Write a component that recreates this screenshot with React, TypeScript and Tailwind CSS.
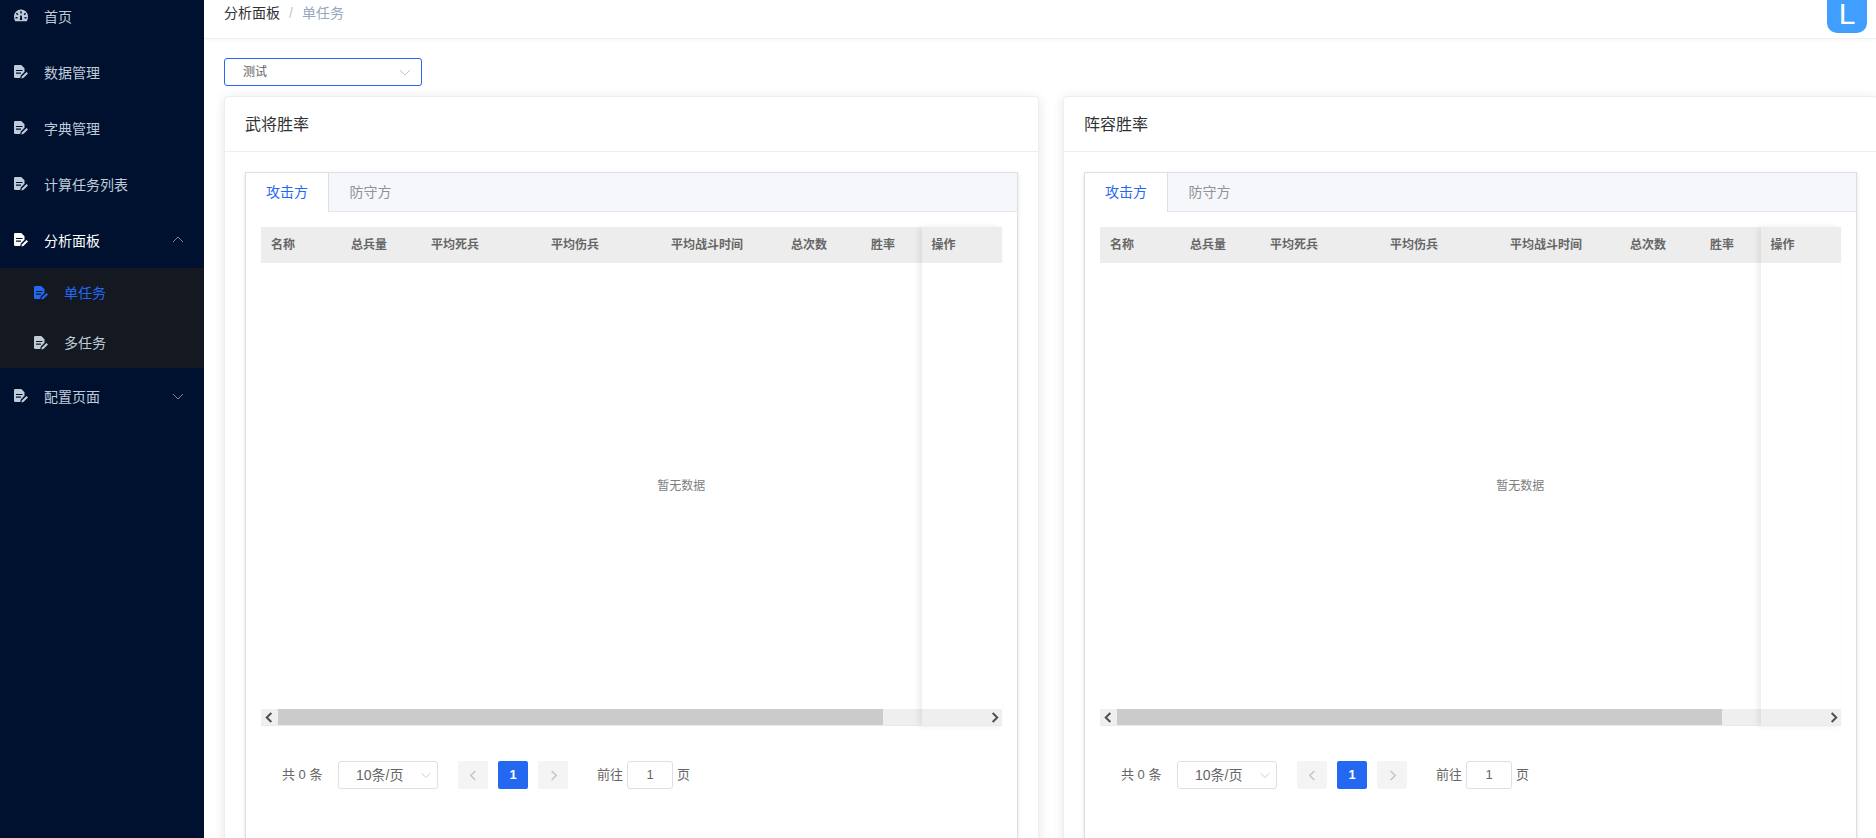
const FONT = "font-['Liberation_Sans','Noto_Sans_CJK_SC',sans-serif]"

function FileIcon({ className }: { className: string }) {
  return (
    <svg viewBox="0 0 14 14" className={`w-[14px] h-[14px] ${className}`} fill="currentColor">
      <path fillRule="evenodd" d="M0 1.300A1.300 1.300 0 0 1 1.300 0H7.300L10.500 3.200V6.800L6.800 10.500 6.200 13H1.300A1.300 1.300 0 0 1 0 11.700ZM2 5v1.100h6.500V5Zm0 2.600v1.100h5V7.600Z" />
      <path d="M7.400 13.600l.5-2 4.600-4.500 1.500 1.400-4.600 4.500Z" />
    </svg>
  )
}

function GaugeIcon({ className }: { className: string }) {
  return (
    <svg viewBox="0 0 14 14" className={`w-[14px] h-[14px] ${className}`} fill="currentColor">
      <path fillRule="evenodd" d="M7 .5a7 7 0 0 1 7 7c0 1.800-.4 3.300-1.200 4.800H1.200C.4 10.800 0 9.300 0 7.500a7 7 0 0 1 7-7ZM6.300 2.200v2.200h1.400V2.200ZM2.900 3.800l-1 1 1.500 1.500 1-1ZM11.100 3.800 9.600 5.300l1 1 1.500-1.500ZM6.200 6.500 5.800 11h2.400L7.800 6.500ZM1.500 8v1.400h2V8ZM10.500 8v1.400h2V8Z" />
    </svg>
  )
}

function Chevron({ dir, className }: { dir: 'up' | 'down' | 'left' | 'right'; className: string }) {
  const points = {
    up: '1,8 6,3 11,8',
    down: '1,4 6,9 11,4',
    left: '8,1 3,6 8,11',
    right: '4,1 9,6 4,11',
  }[dir]
  return (
    <svg viewBox="0 0 12 12" className={className} fill="none" stroke="currentColor" strokeWidth="1">
      <polyline points={points} />
    </svg>
  )
}

function MenuItem({ label, icon, arrow, active }: { label: string; icon?: 'gauge'; arrow?: 'up' | 'down'; active?: boolean }) {
  const color = active ? 'text-white' : 'text-[#bfcbd9]'
  return (
    <div className={`h-[56px] flex items-center pl-[14px] pr-[20px] text-[14px] ${color}`}>
      {icon === 'gauge' ? <GaugeIcon className="mr-[16px]" /> : <FileIcon className="mr-[16px]" />}
      <span className="flex-1 pt-[2px]">{label}</span>
      {arrow && <Chevron dir={arrow} className="w-[12px] h-[12px] text-[#7a8699]" />}
    </div>
  )
}

function SubItem({ label, active }: { label: string; active?: boolean }) {
  const color = active ? 'text-[#2468f2]' : 'text-[#bfcbd9]'
  return (
    <div className={`h-[50px] flex items-center pl-[34px] text-[14px] ${color}`}>
      <FileIcon className="mr-[16px]" />
      <span>{label}</span>
    </div>
  )
}

function Sidebar() {
  return (
    <aside className="w-[204px] shrink-0 bg-[#001130] overflow-hidden">
      <div className="-mt-[12px]">
        <MenuItem label="首页" icon="gauge" />
        <MenuItem label="数据管理" />
        <MenuItem label="字典管理" />
        <MenuItem label="计算任务列表" />
        <MenuItem label="分析面板" arrow="up" active />
        <div className="bg-[#131821]">
          <SubItem label="单任务" active />
          <SubItem label="多任务" />
        </div>
        <MenuItem label="配置页面" arrow="down" />
      </div>
    </aside>
  )
}

const columns = [
  { label: '名称', width: 'w-[80px]' },
  { label: '总兵量', width: 'w-[80px]' },
  { label: '平均死兵', width: 'w-[120px]' },
  { label: '平均伤兵', width: 'w-[120px]' },
  { label: '平均战斗时间', width: 'w-[120px]' },
  { label: '总次数', width: 'w-[80px]' },
  { label: '胜率', width: 'w-[60px]' },
]

function DataTable() {
  return (
    <div className="relative w-[740.5px] h-[499px] flex flex-col">
      <div className="h-[36px] flex bg-[#ededed] text-[12px] font-bold text-[#666666] items-center shrink-0 pb-[1px]">
        {columns.map(c => (
          <div key={c.label} className={`${c.width} pl-[10px] shrink-0`}>{c.label}</div>
        ))}
      </div>
      <div className="flex-1 flex items-center justify-center text-[12px] text-[#808080] pl-[100px]">暂无数据</div>
      <div className="h-[16px] flex bg-[#efefef] shrink-0 border-b border-[#e8eaf2] box-content">
        <div className="w-[17px] flex items-center justify-center text-[#505050]">
          <Chevron dir="left" className="w-[11px] h-[11px] stroke-[2.2]" />
        </div>
        <div className="w-[604.5px] bg-[#cbcbcb]" />
        <div className="flex-1 flex items-center justify-end pr-[2px] text-[#505050]">
          <Chevron dir="right" className="w-[11px] h-[11px] stroke-[2.2]" />
        </div>
      </div>
      {/* fixed column */}
      <div className="absolute right-0 top-0 bottom-0 w-[80px] shadow-[-3px_0_6px_rgba(0,0,0,0.08)]">
        <div className="h-[36px] flex items-center pl-[10px] pb-[1px] bg-[#ededed] text-[12px] font-bold text-[#666666]">操作</div>
      </div>
    </div>
  )
}

function Pager() {
  return (
    <div className="flex items-center h-[28px] mt-[35px] pl-[21px] text-[13px] text-[#666666]">
      <span className="w-[56px]">共 0 条</span>
      <div className="w-[100px] h-[28px] border border-[#dcdfe6] rounded-[3px] flex items-center pl-[17px] pr-[6px]">
        <span className="flex-1 text-[14px]">10条/页</span>
        <Chevron dir="down" className="w-[10px] h-[10px] text-[#c0c4cc]" />
      </div>
      <div className="ml-[20px] w-[30px] h-[28px] bg-[#f4f4f5] rounded-[2px] flex items-center justify-center text-[#c0c4cc]">
        <Chevron dir="left" className="w-[11px] h-[11px] stroke-[1.6]" />
      </div>
      <div className="ml-[10px] w-[30px] h-[28px] bg-[#2468f2] rounded-[2px] flex items-center justify-center text-white font-bold">1</div>
      <div className="ml-[10px] w-[30px] h-[28px] bg-[#f4f4f5] rounded-[2px] flex items-center justify-center text-[#c0c4cc]">
        <Chevron dir="right" className="w-[11px] h-[11px] stroke-[1.6]" />
      </div>
      <span className="ml-[29px]">前往</span>
      <div className="ml-[4px] w-[46px] h-[28px] border border-[#dcdfe6] rounded-[3px] flex items-center justify-center">1</div>
      <span className="ml-[4px]">页</span>
    </div>
  )
}

function RateCard({ title }: { title: string }) {
  return (
    <section className="w-[815px] shrink-0 bg-white border border-[#ebeef5] rounded-[4px] shadow-[0_2px_12px_rgba(0,0,0,0.1)] h-[760px]">
      <div className="h-[55px] flex items-center pl-[20px] pt-[2px] border-b border-[#ebeef5] text-[16px] text-[#303133]">{title}</div>
      <div className="ml-[20px] mt-[20px] w-[772.5px] h-[700px] bg-white border border-[#dcdfe6] shadow-[0_2px_4px_rgba(0,0,0,0.12)]">
        <div className="h-[39px] flex bg-[#f5f7fa] border-b border-[#e4e7ed] text-[14px]">
          <div className="w-[83px] -mb-[1px] h-[39px] bg-white border-r border-[#dcdfe6] flex items-center justify-center text-[#2468f2]">攻击方</div>
          <div className="w-[83px] flex items-center justify-center text-[#909399]">防守方</div>
        </div>
        <div className="pl-[15px] pt-[15px]">
          <DataTable />
          <Pager />
        </div>
      </div>
    </section>
  )
}

export default function App() {
  return (
    <div className={`h-[838px] w-[1876px] flex overflow-hidden bg-white ${FONT}`}>
      <Sidebar />
      <main className="flex-1 min-w-0 overflow-hidden">
        <header className="h-[39px] border-b border-[#f0f0f0] shadow-[0_1px_3px_rgba(0,0,0,0.04)] flex pl-[20px] pr-[9px]">
          <div className="flex-1 flex h-[26px] items-center text-[14px]">
            <span className="text-[#303133]">分析面板</span>
            <span className="mx-[9px] text-[#c0c4cc]">/</span>
            <span className="text-[#97a8be]">单任务</span>
          </div>
          <div className="w-[40px] h-[33px] bg-[#409eff] rounded-b-[10px] flex items-end justify-center text-white text-[30px] leading-[22px] pb-[8px]">L</div>
        </header>
        <div className="pl-[20px] pt-[19px]">
          <div className="w-[198px] h-[28px] border border-[#2468f2] rounded-[3px] flex items-center pl-[18px] pr-[10px] text-[12px] text-[#606266]">
            <span className="flex-1">测试</span>
            <Chevron dir="down" className="w-[12px] h-[12px] text-[#c0c4cc]" />
          </div>
          <div className="flex gap-[24px] mt-[10px]">
            <RateCard title="武将胜率" />
            <RateCard title="阵容胜率" />
          </div>
        </div>
      </main>
    </div>
  )
}
